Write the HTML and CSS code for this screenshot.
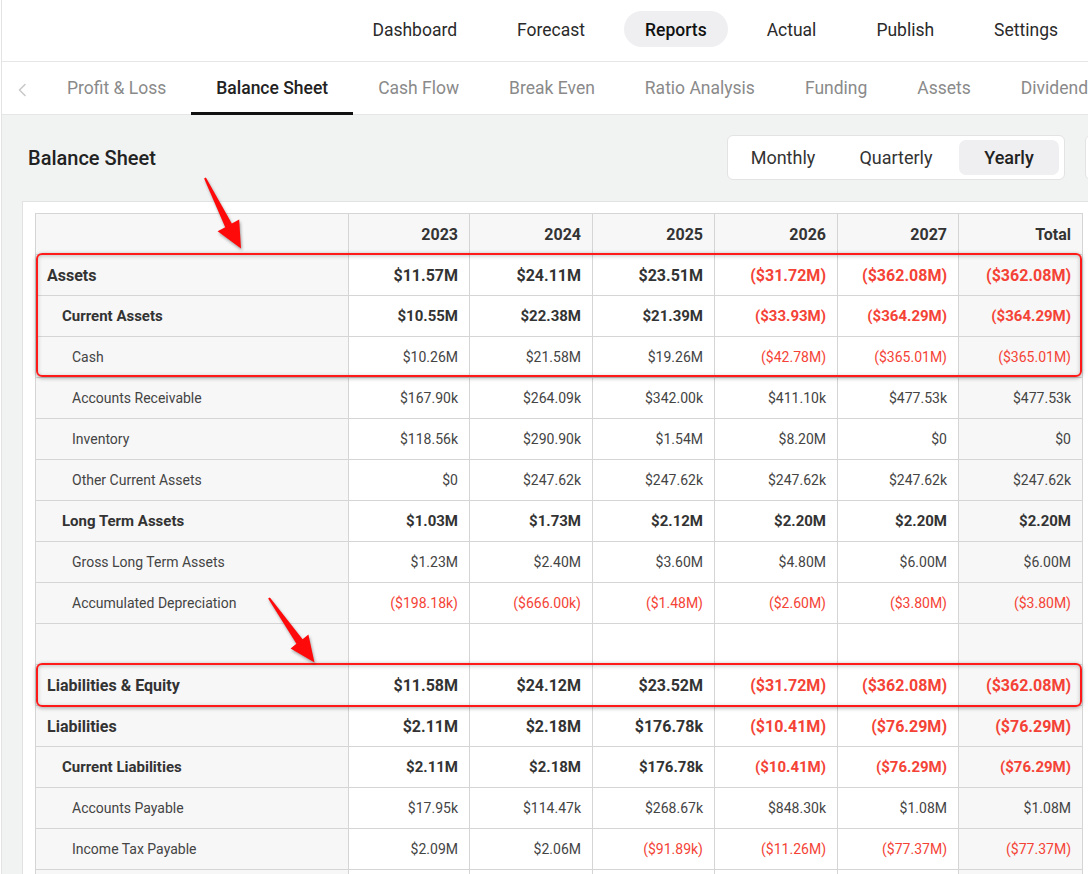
FILE: index.html
```html
<!DOCTYPE html>
<html lang="en">
<head>
<meta charset="utf-8">
<title>Balance Sheet</title>
<link rel="stylesheet" href="styles.css">
</head>
<body>
<div class="app">
  <header class="topnav">
    <a class="nav-item">Dashboard</a>
    <a class="nav-item">Forecast</a>
    <a class="nav-item active">Reports</a>
    <a class="nav-item">Actual</a>
    <a class="nav-item">Publish</a>
    <a class="nav-item">Settings</a>
  </header>
  <nav class="tabs">
    <span class="tab-prev">
      <svg width="10" height="14" viewBox="0 0 10 14"><polyline points="8,1.5 2.5,7 8,12.5" fill="none" stroke="#c9c9c9" stroke-width="1.6" stroke-linecap="round" stroke-linejoin="round"/></svg>
    </span>
    <span class="tab">Profit &amp; Loss</span>
    <span class="tab active">Balance Sheet</span>
    <span class="tab">Cash Flow</span>
    <span class="tab">Break Even</span>
    <span class="tab">Ratio Analysis</span>
    <span class="tab">Funding</span>
    <span class="tab">Assets</span>
    <span class="tab">Dividend</span>
  </nav>
  <main class="content">
    <div class="page-head">
      <h1 class="page-title">Balance Sheet</h1>
      <div class="period">
        <span class="period-btn">Monthly</span>
        <span class="period-btn">Quarterly</span>
        <span class="period-btn active">Yearly</span>
      </div>
      <div class="head-extra"></div>
    </div>
    <section class="card">
      <table class="sheet">
        <colgroup>
          <col class="c-lbl"><col class="c1"><col class="c2"><col class="c3"><col class="c4"><col class="c5"><col class="c6">
        </colgroup>
        <thead>
          <tr><td class="lbl"></td><td>2023</td><td>2024</td><td>2025</td><td>2026</td><td>2027</td><td class="tot">Total</td></tr>
        </thead>
        <tbody>
          <tr class="l0"><td class="lbl">Assets</td><td>$11.57M</td><td>$24.11M</td><td>$23.51M</td><td class="neg">($31.72M)</td><td class="neg">($362.08M)</td><td class="tot neg">($362.08M)</td></tr>
          <tr class="l1"><td class="lbl">Current Assets</td><td>$10.55M</td><td>$22.38M</td><td>$21.39M</td><td class="neg">($33.93M)</td><td class="neg">($364.29M)</td><td class="tot neg">($364.29M)</td></tr>
          <tr class="l2"><td class="lbl">Cash</td><td>$10.26M</td><td>$21.58M</td><td>$19.26M</td><td class="neg">($42.78M)</td><td class="neg">($365.01M)</td><td class="tot neg">($365.01M)</td></tr>
          <tr class="l2"><td class="lbl">Accounts Receivable</td><td>$167.90k</td><td>$264.09k</td><td>$342.00k</td><td>$411.10k</td><td>$477.53k</td><td class="tot">$477.53k</td></tr>
          <tr class="l2"><td class="lbl">Inventory</td><td>$118.56k</td><td>$290.90k</td><td>$1.54M</td><td>$8.20M</td><td>$0</td><td class="tot">$0</td></tr>
          <tr class="l2"><td class="lbl">Other Current Assets</td><td>$0</td><td>$247.62k</td><td>$247.62k</td><td>$247.62k</td><td>$247.62k</td><td class="tot">$247.62k</td></tr>
          <tr class="l1"><td class="lbl">Long Term Assets</td><td>$1.03M</td><td>$1.73M</td><td>$2.12M</td><td>$2.20M</td><td>$2.20M</td><td class="tot">$2.20M</td></tr>
          <tr class="l2"><td class="lbl">Gross Long Term Assets</td><td>$1.23M</td><td>$2.40M</td><td>$3.60M</td><td>$4.80M</td><td>$6.00M</td><td class="tot">$6.00M</td></tr>
          <tr class="l2"><td class="lbl">Accumulated Depreciation</td><td class="neg">($198.18k)</td><td class="neg">($666.00k)</td><td class="neg">($1.48M)</td><td class="neg">($2.60M)</td><td class="neg">($3.80M)</td><td class="tot neg">($3.80M)</td></tr>
          <tr class="l2"><td class="lbl"></td><td></td><td></td><td></td><td></td><td></td><td class="tot"></td></tr>
          <tr class="l0"><td class="lbl">Liabilities &amp; Equity</td><td>$11.58M</td><td>$24.12M</td><td>$23.52M</td><td class="neg">($31.72M)</td><td class="neg">($362.08M)</td><td class="tot neg">($362.08M)</td></tr>
          <tr class="l0"><td class="lbl">Liabilities</td><td>$2.11M</td><td>$2.18M</td><td>$176.78k</td><td class="neg">($10.41M)</td><td class="neg">($76.29M)</td><td class="tot neg">($76.29M)</td></tr>
          <tr class="l1"><td class="lbl">Current Liabilities</td><td>$2.11M</td><td>$2.18M</td><td>$176.78k</td><td class="neg">($10.41M)</td><td class="neg">($76.29M)</td><td class="tot neg">($76.29M)</td></tr>
          <tr class="l2"><td class="lbl">Accounts Payable</td><td>$17.95k</td><td>$114.47k</td><td>$268.67k</td><td>$848.30k</td><td>$1.08M</td><td class="tot">$1.08M</td></tr>
          <tr class="l2"><td class="lbl">Income Tax Payable</td><td>$2.09M</td><td>$2.06M</td><td class="neg">($91.89k)</td><td class="neg">($11.26M)</td><td class="neg">($77.37M)</td><td class="tot neg">($77.37M)</td></tr>
          <tr class="l2 spacer-row"><td class="lbl"></td><td></td><td></td><td></td><td></td><td></td><td class="tot"></td></tr>
        </tbody>
      </table>
    </section>
  </main>
</div>

<div class="annot">
  <div class="hl hl-assets"></div>
  <div class="hl hl-le"></div>
  <svg class="arrows" width="1088" height="874" viewBox="0 0 1088 874">
    <polygon points="205.9,177.4 231.8,223.6 239.2,219.6 241,248.5 217.6,231.2 225.2,227.3 204.1,178.6" fill="#ff0a0a"/>
    <polygon points="269.9,597.4 302.6,639.3 308.4,634.6 314.5,662.5 290.6,648.6 296.4,643.7 268.1,598.6" fill="#ff0a0a"/>
  </svg>
</div>
</body>
</html>
```

FILE: styles.css
```css
* { box-sizing: border-box; }

html, body {
  margin: 0;
  padding: 0;
}

body {
  width: 1088px;
  height: 874px;
  overflow: hidden;
  background: #ffffff;
  font-family: Roboto, "Liberation Sans", Arial, sans-serif;
  color: #333;
}

.app {
  margin-left: 1px;
  border-left: 1px solid #e3e3e3;
  min-height: 874px;
  background: #f1f2f2;
}

/* ---------- top navigation ---------- */
.topnav {
  height: 62px;
  background: #fff;
  border-bottom: 1px solid #e6e6e6;
  display: flex;
  justify-content: flex-end;
  align-items: flex-start;
  gap: 18px;
  padding: 11px 9px 0 0;
}

.nav-item {
  height: 36px;
  line-height: 39px;
  padding: 0 21px;
  border-radius: 18px;
  font-size: 17.5px;
  color: #2a2a2a;
  cursor: pointer;
  white-space: nowrap;
}

.nav-item.active {
  background: #efeff1;
  color: #111;
  font-weight: 500;
}

/* ---------- report tabs ---------- */
.tabs {
  height: 53px;
  background: #fff;
  border-bottom: 1px solid #e6e6e6;
  display: flex;
  align-items: stretch;
  white-space: nowrap;
}

.tab-prev {
  width: 40px;
  flex: 0 0 40px;
  display: flex;
  align-items: center;
  justify-content: center;
  padding-top: 4px;
}

.tab {
  position: relative;
  display: flex;
  align-items: center;
  padding: 0 25px;
  font-size: 17.5px;
  color: #8a8a8a;
  flex: 0 0 auto;
}

.tab.active {
  color: #222;
  font-weight: 500;
}

.tab.active::after {
  content: "";
  position: absolute;
  left: 0;
  right: 0;
  bottom: -1px;
  height: 3px;
  background: #111;
}

/* ---------- content ---------- */
.content {
  padding: 20px 0 0 20px;
}

.page-head {
  display: flex;
  align-items: center;
  width: 1123px;
  height: 45px;
  margin-bottom: 21px;
}

.page-title {
  margin: 0 auto 0 6px;
  font-size: 20px;
  font-weight: 500;
  color: #222;
}

.period {
  display: flex;
  gap: 13px;
  padding: 4px 5px;
  background: #fff;
  border: 1px solid #e3e3e3;
  border-radius: 6px;
}

.period-btn {
  width: 100px;
  height: 35px;
  line-height: 35px;
  text-align: center;
  font-size: 18px;
  color: #333;
  border-radius: 7px;
}

.period-btn.active {
  background: #efeff1;
  color: #222;
  font-weight: 500;
}

.head-extra {
  margin-left: 20px;
  width: 60px;
  height: 45px;
  background: #fff;
  border: 1px solid #e3e3e3;
  border-radius: 6px;
}

.card {
  width: 1075px;
  background: #fff;
  border: 1px solid #e2e2e2;
  padding: 11px 13px 20px 12px;
}

/* ---------- table ---------- */
.sheet {
  border-collapse: collapse;
  table-layout: fixed;
  width: 1047px;
}

.c-lbl { width: 313px; }
.c1 { width: 121px; }
.c2 { width: 123px; }
.c3 { width: 122px; }
.c4 { width: 123px; }
.c5 { width: 121px; }
.c6 { width: 124px; }

.sheet td {
  border: 1px solid #d5d5d5;
  height: 41px;
  padding: 0 11px;
  text-align: right;
  font-size: 14px;
  color: #444;
  white-space: nowrap;
  overflow: hidden;
}

.sheet td.lbl {
  text-align: left;
  background: #f7f7f7;
}

.sheet td.tot {
  background: #f7f7f7;
}

.sheet thead td {
  background: #f7f7f7;
  font-size: 16px;
  font-weight: 700;
  color: #333;
}

.sheet tr.l0 td {
  font-size: 16px;
  font-weight: 700;
  color: #333;
}

.sheet tr.l1 td {
  font-size: 15px;
  font-weight: 700;
  color: #333;
}

.sheet tr.l1 td.lbl { padding-left: 26px; }
.sheet tr.l2 td.lbl { padding-left: 36px; }

.sheet tr td.neg {
  color: #f44336;
}

/* ---------- annotations drawn over the screenshot ---------- */
.annot {
  position: absolute;
  left: 0;
  top: 0;
  width: 1088px;
  height: 874px;
  pointer-events: none;
}

.hl {
  position: absolute;
  left: 36px;
  width: 1046px;
  border: 2px solid #ff1a1a;
  border-radius: 6px;
  box-shadow: 0 1px 4px rgba(0, 0, 0, 0.35), inset 0 1px 4px rgba(0, 0, 0, 0.22);
}

.hl-assets {
  top: 253px;
  height: 124px;
}

.hl-le {
  top: 663px;
  height: 44px;
}

.arrows {
  position: absolute;
  left: 0;
  top: 0;
  filter: drop-shadow(1px 2px 1.5px rgba(0, 0, 0, 0.35));
}
```
